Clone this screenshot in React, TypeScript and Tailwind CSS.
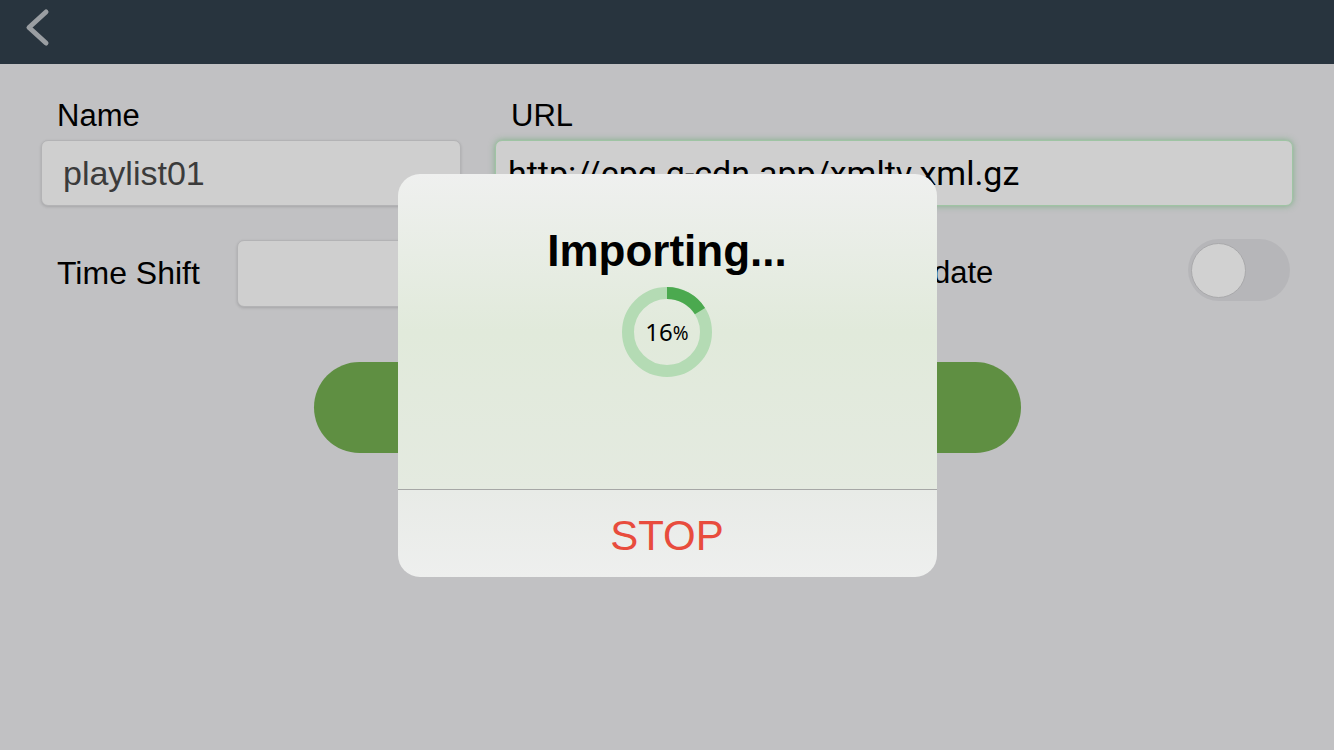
/**
 * Playlist editor with import progress dialog.
 */

function ProgressRing({ percent }: { percent: number }) {
  const r = 39;
  const c = 2 * Math.PI * r;
  return (
    <div className="relative w-[90px] h-[90px]">
      <svg width="90" height="90" viewBox="0 0 90 90" className="-rotate-90">
        <circle cx="45" cy="45" r={r} fill="none" stroke="#b4dbb4" strokeWidth="12" />
        <circle
          cx="45"
          cy="45"
          r={r}
          fill="none"
          stroke="#4ba94f"
          strokeWidth="12"
          strokeDasharray={`${(c * percent) / 100} ${c}`}
        />
      </svg>
      <div className="absolute inset-0 flex items-center justify-center font-['Noto_Sans',sans-serif] text-black">
        <span className="text-[24px] leading-none">{percent}</span>
        <span className="text-[19px] leading-none mt-[4px]">%</span>
      </div>
    </div>
  );
}

export default function App() {
  return (
    <div className="relative w-[1334px] h-[750px] overflow-hidden bg-[#c1c1c3] font-['Liberation_Sans',Arial,sans-serif]">
      {/* Header */}
      <header className="h-16 bg-[#28343e] flex items-start">
        <svg width="64" height="56" viewBox="0 0 64 56" className="text-[#9a9ea2]">
          <path
            d="M46 12 L29 27.5 L46 43"
            fill="none"
            stroke="currentColor"
            strokeWidth="5"
            strokeLinecap="round"
            strokeLinejoin="round"
          />
        </svg>
      </header>

      {/* Form */}
      <main className="pt-[34px]">
        <div className="grid grid-cols-[420px_798px] gap-x-[34px] pl-[41px]">
          <label className="pl-4 text-[31px] leading-[36px] text-black">Name</label>
          <label className="pl-4 text-[31px] leading-[36px] text-black">URL</label>
          <div className="mt-[6px] h-[66px] rounded-[7px] bg-[#cfcfcf] border border-[#b3b3b5] shadow-[0_1px_3px_rgba(0,0,0,0.15)] flex items-center pl-[21px] text-[34px] text-[#3b3b3b]">
            playlist01
          </div>
          <div className="mt-[6px] h-[66px] rounded-[7px] bg-[#cfcfcf] border border-[#9fc4a4] shadow-[0_0_6px_rgba(76,160,90,0.55)] flex items-center pl-[12px] text-[34px] text-black font-['Roboto',sans-serif]">
            http://epg.g-cdn.app/xmltv.xml.gz
          </div>
        </div>

        <div className="mt-[33px] flex items-center pl-[57px] pr-[44px]">
          <span className="w-[180px] text-[32px] text-black">Time Shift</span>
          <div className="w-[420px] h-[67px] rounded-[7px] bg-[#cfcfcf] border border-[#b3b3b5] shadow-[0_1px_3px_rgba(0,0,0,0.15)]" />
          <span className="ml-[164px] text-[31px] text-black">Auto Update</span>
          <div className="ml-auto mb-[6px] w-[102px] h-[62px] rounded-full bg-[#b6b6b9] p-[3px] flex items-center">
            <div className="w-[55px] h-[55px] rounded-full bg-[#d1d1d1] border border-[#a9a9ab]" />
          </div>
        </div>

        <div className="mt-[55px] flex justify-center">
          <button className="w-[707px] h-[91px] rounded-full bg-[#5f8f42] text-white text-[32px]">
            Import
          </button>
        </div>
      </main>

      {/* Importing dialog */}
      <div className="absolute inset-0 flex items-center justify-center">
        <div className="w-[539px] h-[403px] rounded-[22px] overflow-hidden flex flex-col">
          <div className="h-[315px] bg-gradient-to-b from-[#eff0ef] via-[#e1eadb] to-[#e4eae0] flex flex-col items-center pt-[53px]">
            <h2 className="text-[44px] leading-[48px] font-bold text-black">Importing...</h2>
            <div className="mt-3">
              <ProgressRing percent={16} />
            </div>
          </div>
          <div className="h-px bg-[#a6a7a6]" />
          <button className="flex-1 bg-gradient-to-b from-[#e8ebe7] to-[#eeefee] text-[42px] text-[#e84c3d] pt-[4px]">
            STOP
          </button>
        </div>
      </div>
    </div>
  );
}
